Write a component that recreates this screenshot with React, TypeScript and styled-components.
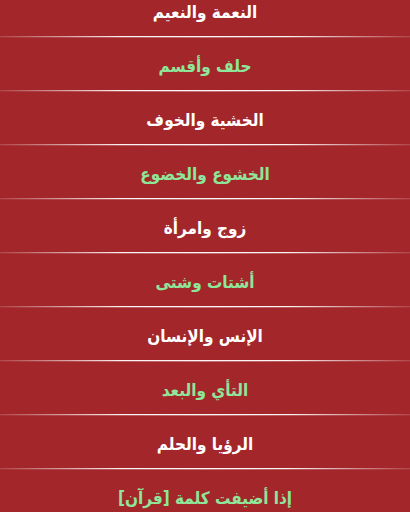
import React from "react";
import styled, { createGlobalStyle } from "styled-components";

const Global = createGlobalStyle`
  html, body { margin: 0; padding: 0; background: #a3262a; overflow: hidden; }
  #root { width: 410px; height: 512px; overflow: hidden; }
`;

const List = styled.ul`
  list-style: none;
  margin: -16px 0 0 0;
  padding: 0;
  background: #a3262a;
  direction: rtl;
`;

const Item = styled.li<{ $green: boolean }>`
  height: 52px;
  display: flex;
  align-items: center;
  justify-content: center;
  padding-top: 3px;
  box-sizing: border-box;
  font-family: "DejaVu Sans Condensed", "DejaVu Sans", sans-serif;
  font-weight: bold;
  font-size: 17px;
  color: ${(p) => (p.$green ? "#8ee69a" : "#ffffff")};
`;

const Separator = styled.li`
  height: 2px;
  background:
    linear-gradient(to right, rgba(255,255,255,0.15), rgba(255,255,255,0.95) 30%, rgba(255,255,255,0.95) 70%, rgba(255,255,255,0.15)) top / 100% 1px no-repeat,
    linear-gradient(to right, rgba(255,255,255,0.05), rgba(255,255,255,0.35) 50%, rgba(255,255,255,0.05)) bottom / 100% 1px no-repeat;
`;

const titles = [
  "النعمة والنعيم",
  "حلف وأقسم",
  "الخشية والخوف",
  "الخشوع والخضوع",
  "زوج وامرأة",
  "أشتات وشتى",
  "الإنس والإنسان",
  "التأي والبعد",
  "الرؤيا والحلم",
  "إذا أضيفت كلمة [قرآن]",
];

export default function App() {
  return (
    <>
      <Global />
      <List>
        {titles.map((t, i) => (
          <React.Fragment key={t}>
            <Item $green={i % 2 === 1}>{t}</Item>
            {i < titles.length - 1 && <Separator />}
          </React.Fragment>
        ))}
      </List>
    </>
  );
}
